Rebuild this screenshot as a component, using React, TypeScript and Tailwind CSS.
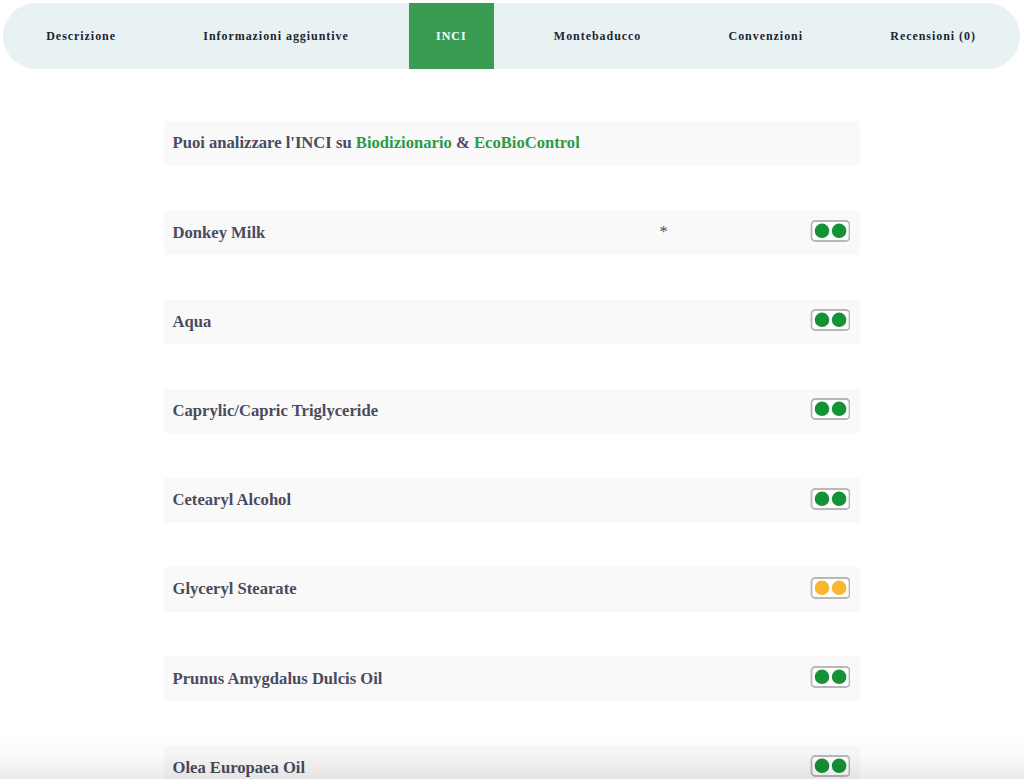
import clsx from "clsx";

interface Ingredient {
  name: string;
  note?: string;
  rating: "green" | "yellow";
}

const tabs = [
  "Descrizione",
  "Informazioni aggiuntive",
  "INCI",
  "Montebaducco",
  "Convenzioni",
  "Recensioni (0)",
];

const ingredients: Ingredient[] = [
  { name: "Donkey Milk", note: "*", rating: "green" },
  { name: "Aqua", rating: "green" },
  { name: "Caprylic/Capric Triglyceride", rating: "green" },
  { name: "Cetearyl Alcohol", rating: "green" },
  { name: "Glyceryl Stearate", rating: "yellow" },
  { name: "Prunus Amygdalus Dulcis Oil", rating: "green" },
  { name: "Olea Europaea Oil", rating: "green" },
];

function RatingBadge({ rating }: { rating: Ingredient["rating"] }) {
  const fill = rating === "green" ? "fill-[#159136]" : "fill-[#fbb62c]";
  return (
    <svg width="40" height="22" viewBox="0 0 40 22" className={clsx("block", fill)}>
      <rect x="1.5" y="1" width="38" height="20" rx="3.5" fill="#fff" stroke="#b8b8b8" strokeWidth="1.8" />
      <circle cx="12" cy="10.8" r="7.3" />
      <circle cx="29.1" cy="10.8" r="7.3" />
    </svg>
  );
}

export default function App() {
  return (
    <div className="relative h-[779px] overflow-hidden bg-white font-['Liberation_Serif',serif] font-bold">
      <nav className="mt-[3px] mr-[4px] ml-[3px] flex h-[66px] justify-around overflow-hidden rounded-full bg-[#e9f2f3] text-xs tracking-[0.95px] text-[#1d2433]">
        {tabs.map((tab) => (
          <a
            key={tab}
            href="#"
            className={clsx(
              "flex items-center pr-[27.6px] pl-[26.8px]",
              tab === "INCI" && "bg-[#3a9b52] text-white"
            )}
          >
            {tab}
          </a>
        ))}
      </nav>

      <main className="mt-[52.3px] ml-[164px] flex w-[696px] flex-col gap-[44.7px] text-[16.63px] text-[#4a4b5c]">
        <p className="flex h-[44.5px] shrink-0 items-center bg-[#f9f9f9] px-[8.5px] whitespace-pre">
          Puoi analizzare l'INCI su <a href="#" className="text-[#2e9a48]">Biodizionario</a> &amp;{" "}
          <a href="#" className="text-[#2e9a48]">EcoBioControl</a>
        </p>
        {ingredients.map((item) => (
          <div
            key={item.name}
            className="grid h-[44.5px] shrink-0 grid-cols-[487px_1fr_40px] items-center bg-[#f9f9f9] pr-[10px] pl-[8.5px]"
          >
            <span className="pt-[0.8px]">{item.name}</span>
            <span className="font-normal">{item.note}</span>
            <div className="-mt-[3.6px]">
              <RatingBadge rating={item.rating} />
            </div>
          </div>
        ))}
      </main>

      {/* fade at the bottom of the viewport */}
      <div className="pointer-events-none absolute inset-x-0 bottom-0 h-[46px] bg-linear-to-b from-transparent via-black/[0.02] to-black/[0.085]" />
    </div>
  );
}
